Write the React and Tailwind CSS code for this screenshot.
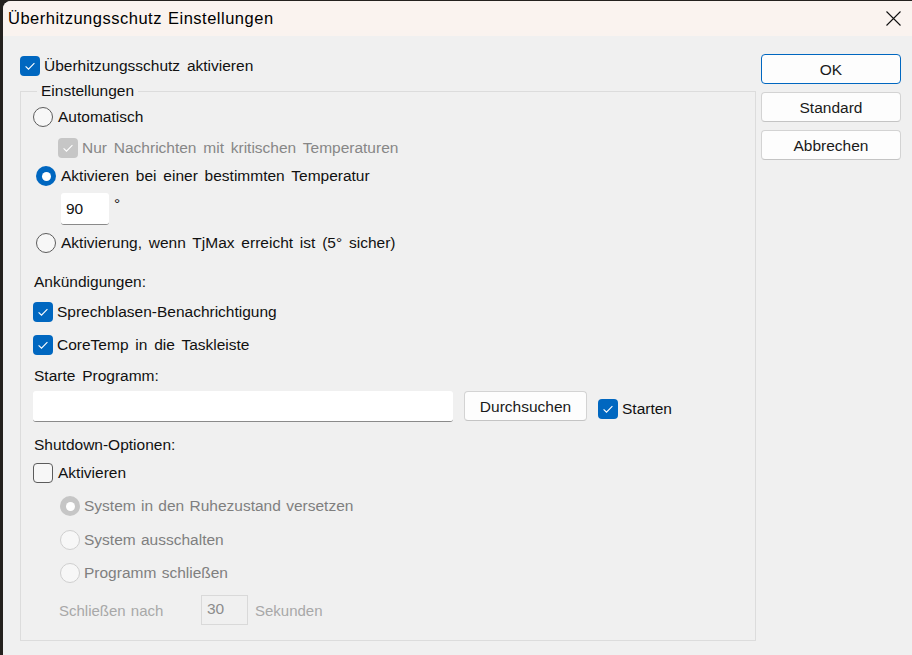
import React from "react";

const Check = ({ checked, disabled }) => {
  let look = "border border-[#5c5c5c] bg-[#f7f7f7]";
  if (checked && disabled) look = "bg-[#c6c6c6]";
  else if (checked) look = "bg-[#0067c0]";
  return (
    <span className={`flex h-5 w-5 shrink-0 items-center justify-center rounded-[4px] ${look}`}>
      {checked && (
        <svg viewBox="0 0 20 20" className="h-5 w-5">
          <path d="M5.6 10.3l2.9 2.9 5.9-6.1" fill="none" stroke="white" strokeWidth="1.1" />
        </svg>
      )}
    </span>
  );
};

const Radio = ({ checked, disabled }) => {
  if (checked) {
    return (
      <span
        className={`flex h-5 w-5 shrink-0 items-center justify-center rounded-full ${
          disabled ? "bg-[#c6c6c6]" : "bg-[#0067c0]"
        }`}
      >
        <span className="h-[9px] w-[9px] rounded-full bg-white" />
      </span>
    );
  }
  return (
    <span
      className={`h-5 w-5 shrink-0 rounded-full border bg-[#f7f7f7] ${
        disabled ? "border-[#cfcfcf]" : "border-[#5c5c5c]"
      }`}
    />
  );
};

const Button = ({ children, primary }) => (
  <button
    className={`flex h-[30px] w-full items-center justify-center rounded-[4px] border bg-[#fdfdfd] pt-px text-[#1a1a1a] ${
      primary ? "border-[#0067c0]" : "border-[#d3d3d3] border-b-[#c4c4c4]"
    }`}
  >
    {children}
  </button>
);

export default function App() {
  return (
    <div className="flex h-[655px] w-[912px] bg-[#24211e] pl-[3px] pt-px font-['Liberation_Sans',Arial,sans-serif] text-[15.5px] leading-5 text-[#111] [word-spacing:2.5px]">
      <div className="flex flex-1 flex-col overflow-hidden rounded-tl-[8px] bg-[#f0f0f0]">
        {/* title bar */}
        <div className="flex h-[35px] shrink-0 items-center justify-between bg-[#faf3ef] pl-[5px] pr-[11px]">
          <span className="pb-px text-[16.5px] tracking-[0.5px] text-black [word-spacing:1px]">Überhitzungsschutz Einstellungen</span>
          <svg viewBox="0 0 15 15" className="h-[15px] w-[15px]">
            <path d="M0.5 0.5l14 14M14.5 0.5l-14 14" stroke="#111" strokeWidth="1.1" />
          </svg>
        </div>

        <div className="flex flex-1 pl-[17px]">
          <div className="flex w-[736px] flex-col">
            <label className="mt-5 flex h-5 items-center">
              <Check checked />
              <span className="ml-1">Überhitzungsschutz aktivieren</span>
            </label>

            <fieldset className="mt-[5px] border border-[#dcdcdc] px-3 pb-[15px]">
              <legend className="ml-1 px-1">Einstellungen</legend>

              <div className="mt-[6px] flex h-5 items-center">
                <Radio />
                <span className="ml-[5px]">Automatisch</span>
              </div>
              <div className="mt-[11px] ml-[25px] flex h-5 items-center text-[#878787]">
                <Check checked disabled />
                <span className="ml-1">Nur Nachrichten mit kritischen Temperaturen</span>
              </div>
              <div className="mt-2 ml-[3px] flex h-5 items-center">
                <Radio checked />
                <span className="ml-[5px]">Aktivieren bei einer bestimmten Temperatur</span>
              </div>
              <div className="mt-[7px] ml-[28px] flex items-start">
                <div className="h-8 w-12 rounded-[3px] border-b border-[#8a8a8a] bg-white pl-[5px] pt-[6px]">90</div>
                <span className="ml-[5px] mt-[1px]">°</span>
              </div>
              <div className="mt-2 ml-[3px] flex h-5 items-center">
                <Radio />
                <span className="ml-[5px]">Aktivierung, wenn TjMax erreicht ist (5° sicher)</span>
              </div>

              <div className="mt-[19px] ml-px">Ankündigungen:</div>
              <div className="mt-[10px] flex h-5 items-center">
                <Check checked />
                <span className="ml-1">Sprechblasen-Benachrichtigung</span>
              </div>
              <div className="mt-[13px] flex h-5 items-center">
                <Check checked />
                <span className="ml-1">CoreTemp in die Taskleiste</span>
              </div>

              <div className="mt-[11px] ml-px">Starte Programm:</div>
              <div className="mt-[5px] flex items-start">
                <div className="h-[31px] w-[420px] rounded-[3px] border-b border-[#8a8a8a] bg-white" />
                <div className="ml-[11px] w-[123px]">
                  <Button>Durchsuchen</Button>
                </div>
                <div className="ml-[11px] mt-2 flex h-5 items-center">
                  <Check checked />
                  <span className="ml-1">Starten</span>
                </div>
              </div>

              <div className="mt-[13px] ml-px">Shutdown-Optionen:</div>
              <div className="mt-2 flex h-5 items-center">
                <Check />
                <span className="ml-[5px]">Aktivieren</span>
              </div>
              <div className="ml-[27px] text-[#7f7f7f] [word-spacing:1px]">
                <div className="mt-[13px] flex h-5 items-center">
                  <Radio checked disabled />
                  <span className="ml-1">System in den Ruhezustand versetzen</span>
                </div>
                <div className="mt-[14px] flex h-5 items-center">
                  <Radio disabled />
                  <span className="ml-1">System ausschalten</span>
                </div>
                <div className="mt-[13px] flex h-5 items-center">
                  <Radio disabled />
                  <span className="ml-1">Programm schließen</span>
                </div>
              </div>
              <div className="mt-3 ml-[26px] flex h-[30px] items-center text-[15px] text-[#a8a8a8] [word-spacing:1px]">
                <span className="w-[142px] pt-[2px]">Schließen nach</span>
                <div className="h-[30px] w-[47px] border border-[#d9d9d9] pl-[5px] pt-[3px] text-[15.5px] text-[#8c8c8c]">30</div>
                <span className="ml-[7px] pt-[2px]">Sekunden</span>
              </div>
            </fieldset>
          </div>

          <div className="ml-[5px] mt-[18px] flex w-[140px] flex-col gap-2">
            <Button primary>OK</Button>
            <Button>Standard</Button>
            <Button>Abbrechen</Button>
          </div>
        </div>
      </div>
    </div>
  );
}
